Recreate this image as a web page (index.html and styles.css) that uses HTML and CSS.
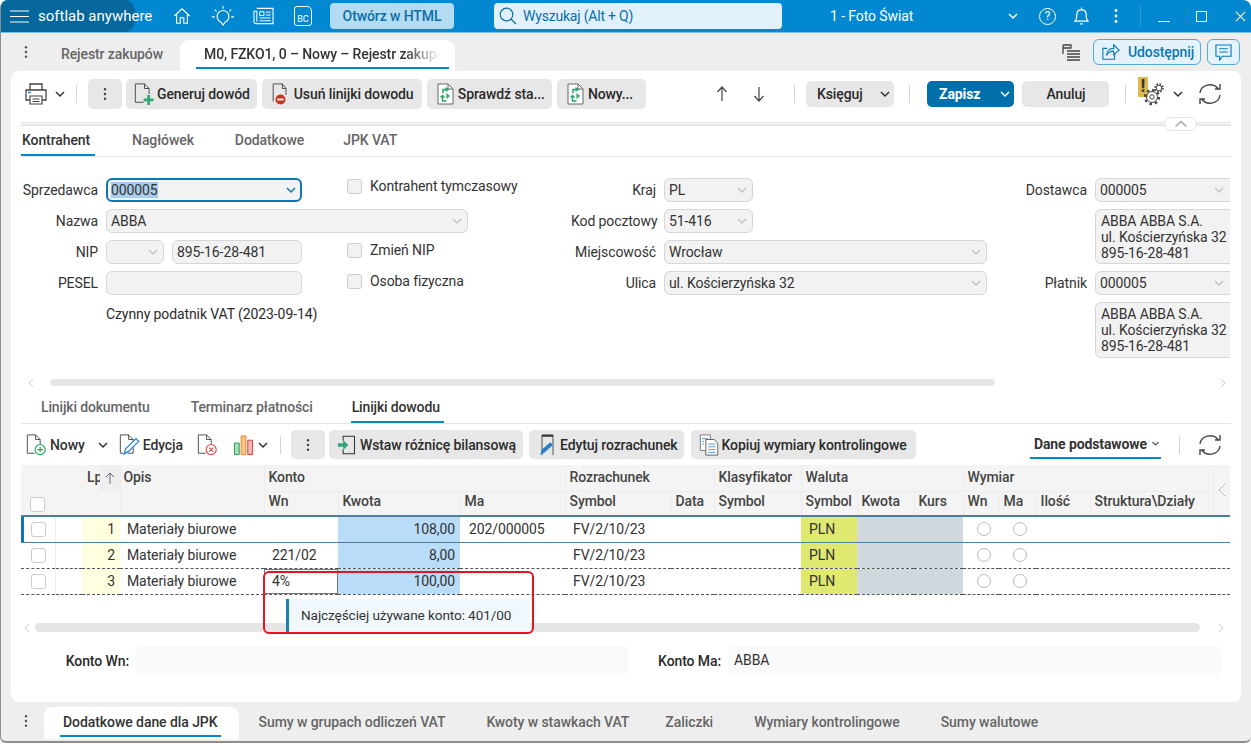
FILE: index.html
```html
<!DOCTYPE html>
<html lang="pl">
<head>
<meta charset="utf-8">
<title>softlab anywhere</title>
<link rel="stylesheet" href="styles.css">
</head>
<body>
<svg class="defs" width="0" height="0">
  <symbol id="chev" viewBox="0 0 12 12"><path d="M2 4l4 4 4-4" fill="none" stroke="currentColor" stroke-width="1.5"/></symbol>
  <symbol id="kebab" viewBox="0 0 4 16"><circle cx="2" cy="2.5" r="1.4" fill="currentColor"/><circle cx="2" cy="8" r="1.4" fill="currentColor"/><circle cx="2" cy="13.5" r="1.4" fill="currentColor"/></symbol>
  <symbol id="refresh" viewBox="0 0 24 24"><path d="M2 11a10 9 0 0 1 18-4.500M22 2v5h-5M22 13a10 9 0 0 1-18 4.500M2 22v-5h5" fill="none" stroke="#444" stroke-width="1.400"/></symbol>
  <symbol id="docarrows" viewBox="0 0 18 22"><path d="M1.500 1h10l5 5v15h-15z" fill="#fff" stroke="#666"/><path d="M11.500 1v5h5" fill="none" stroke="#666"/><path d="M9 4l4 2.500L9 9z" fill="#2ba36a"/><path d="M9.500 6.500H6.500v3.500" fill="none" stroke="#2ba36a" stroke-width="1.500"/><path d="M10 10l3.500 3L10 16z" fill="#2ba36a"/><path d="M3 14.500l3-3 3 3z" fill="#2ba36a"/><path d="M6 14v4h4" fill="none" stroke="#2ba36a" stroke-width="1.500"/></symbol>
</svg>

<div class="app">
  <header class="topbar">
    <div class="brand">
      <svg class="ham" viewBox="0 0 19 13"><path d="M0 1h19M0 6.500h19M0 12h19" stroke="#fff" stroke-width="1.200"/></svg>
      <span class="brand-name">softlab anywhere</span>
    </div>
    <svg class="tb-ic home" viewBox="0 0 20 20"><path d="M1.500 10L10 2l8.500 8M4 8.500V18h4v-6h4v6h4V8.500" fill="none" stroke="#fff" stroke-width="1.200"/></svg>
    <svg class="tb-ic bulb" viewBox="0 0 24 24"><path d="M12 22l-2.500-3.500a6.500 6.500 0 1 1 5 0z" fill="none" stroke="#fff" stroke-width="1.200"/><path d="M12 1v3M3 5l2 2M21 5l-2 2M0 13h3M21 13h3" stroke="#fff" stroke-width="1.200"/></svg>
    <svg class="tb-ic news" viewBox="0 0 22 18"><path d="M4 1h17v16H3a2 2 0 0 1-2-2V4h3v11" fill="none" stroke="#fff" stroke-width="1.100"/><path d="M7 4.500h4.500v4H7z" fill="none" stroke="#fff"/><path d="M13.500 5h5M13.500 8h5M7 11h11.500M7 14h11.500" stroke="#fff"/></svg>
    <span class="bc">BC</span>
    <button class="open-html">Otwórz w HTML</button>
    <div class="search">
      <svg class="search-ic" viewBox="0 0 18 18"><circle cx="7.500" cy="7.500" r="6.300" fill="none" stroke="#0b6ea6" stroke-width="1.200"/><path d="M12 12l5 5" stroke="#0b6ea6" stroke-width="1.200"/></svg>
      <span>Wyszukaj (Alt + Q)</span>
    </div>
    <span class="company">1 - Foto Świat</span>
    <svg class="top-chev"><use href="#chev"/></svg>
    <span class="help">?</span>
    <svg class="bell" viewBox="0 0 16 20"><path d="M1 15.500h14c-2-1.500-2-4-2-7 0-3-2-5-5-5s-5 2-5 5c0 3 0 5.500-2 7zM8 1v2.500M6.500 18.500h3" fill="none" stroke="#fff" stroke-width="1.300"/></svg>
    <svg class="top-kebab"><use href="#kebab"/></svg>
    <span class="top-sep"></span>
    <span class="win-min"></span>
    <span class="win-max"></span>
    <svg class="win-close" viewBox="0 0 12 12"><path d="M1 1l10 10M11 1L1 11" stroke="#fff" stroke-width="1.100"/></svg>
  </header>

  <nav class="doc-tabs">
    <svg class="tab-kebab"><use href="#kebab"/></svg>
    <span class="doc-tab">Rejestr zakupów</span>
    <span class="doc-tab active"><span class="fade">M0, FZKO1, 0 – Nowy – Rejestr zakupów</span></span>
    <svg class="flag-list" viewBox="0 0 18 18"><path d="M1 1v9M1 1h8v3H1M5 7h13M5 10h13M5 13h13M5 16h13" fill="none" stroke="#444" stroke-width="1.300"/></svg>
    <button class="share">
      <svg viewBox="0 0 20 20"><path d="M14 11v7H1V6h5" fill="none" stroke="#0b78b4" stroke-width="1.200"/><path d="M5 14c0-5 3-8 8-8V2l6 6-6 5V9c-4 0-6 1-8 5z" fill="none" stroke="#0b78b4" stroke-width="1.200"/></svg>
      Udostępnij
    </button>
    <button class="chat">
      <svg viewBox="0 0 18 18"><path d="M1 1h16v12H8l-3 4v-4H1zM4.500 5h9M4.500 8.500h9" fill="none" stroke="#0b78b4" stroke-width="1.200"/></svg>
    </button>
  </nav>

  <main class="card">
    <div class="toolbar">
      <svg class="printer" viewBox="0 0 22 22"><path d="M5 7V1h12v6M5 17H1V7h20v10h-4" fill="none" stroke="#444" stroke-width="1.300"/><path d="M5 13h12v8H5zM7.500 16h7M7.500 18.500h7" fill="none" stroke="#444" stroke-width="1.200"/><path d="M3 9.500h3" stroke="#1a88c9" stroke-width="1.300"/></svg>
      <svg class="chev"><use href="#chev"/></svg>
      <span class="sep"></span>
      <button class="btn kebab-btn"><svg class="kb"><use href="#kebab"/></svg></button>
      <button class="btn">
        <svg class="bi" viewBox="0 0 22 24"><path d="M1 1h10l5 5v6M10 21H1V1M11 1v5h5" fill="none" stroke="#444"/><path d="M14 13h3v4h4v3h-4v4h-3v-4h-4v-3h4z" fill="#36a67a"/></svg>
        Generuj dowód
      </button>
      <button class="btn w160">
        <svg class="bi" viewBox="0 0 22 24"><path d="M3 20V1h10l4 5v7M13 1v5h4" fill="none" stroke="#444"/><circle cx="11" cy="18" r="5.500" fill="#c8361f"/><path d="M7.500 18h7" stroke="#fff" stroke-width="2"/></svg>
        Usuń linijki dowodu
      </button>
      <button class="btn"><svg class="bi"><use href="#docarrows"/></svg>Sprawdź sta...</button>
      <button class="btn w89"><svg class="bi"><use href="#docarrows"/></svg>Nowy...</button>
      <div class="toolbar-right">
        <svg class="arrow" viewBox="0 0 12 16"><path d="M6 15V1M1.500 6L6 1l4.500 5" fill="none" stroke="#444" stroke-width="1.200"/></svg>
        <svg class="arrow second" viewBox="0 0 12 16"><path d="M6 1v14M1.500 10L6 15l4.500-5" fill="none" stroke="#444" stroke-width="1.200"/></svg>
        <span class="sep"></span>
        <button class="btn flat">Księguj<svg class="chev"><use href="#chev"/></svg></button>
        <span class="sep"></span>
        <button class="btn primary">Zapisz<svg class="chev"><use href="#chev"/></svg></button>
        <button class="btn cancel">Anuluj</button>
        <span class="sep"></span>
        <span class="gear-wrap">
          <span class="warn">!</span>
          <svg class="gear" viewBox="0 0 28 28"><circle cx="15" cy="17" r="5.500" fill="none" stroke="#444"/><circle cx="15" cy="17" r="7" fill="none" stroke="#444" stroke-width="2.400" stroke-dasharray="2.500 3"/><circle cx="15" cy="17" r="2.200" fill="none" stroke="#444"/><circle cx="22" cy="8" r="2.800" fill="none" stroke="#444"/><circle cx="22" cy="8" r="4" fill="none" stroke="#444" stroke-width="1.600" stroke-dasharray="1.600 1.540"/></svg>
        </span>
        <svg class="chev"><use href="#chev"/></svg>
        <svg class="refresh"><use href="#refresh"/></svg>
      </div>
    </div>

    <div class="collapse-bar"><span class="collapse-pill"><svg viewBox="0 0 14 8"><path d="M1.500 6.500L7 1.500l5.500 5" fill="none" stroke="#aaa" stroke-width="1.500"/></svg></span></div>

    <div class="tabs form-tabs">
      <span class="tab active">Kontrahent</span>
      <span class="tab">Nagłówek</span>
      <span class="tab">Dodatkowe</span>
      <span class="tab">JPK VAT</span>
    </div>

    <section class="form">
      <label class="lbl">Sprzedawca</label>
      <div class="field focus sprz"><span class="sel">000005</span><svg class="fchev blue"><use href="#chev"/></svg></div>
      <label class="check"><span class="cb"></span>Kontrahent tymczasowy</label>
      <label class="lbl">Kraj</label>
      <div class="field kraj">PL<svg class="fchev"><use href="#chev"/></svg></div>
      <label class="lbl">Dostawca</label>
      <div class="field clip">000005<svg class="fchev"><use href="#chev"/></svg></div>

      <label class="lbl">Nazwa</label>
      <div class="field nazwa">ABBA<svg class="fchev"><use href="#chev"/></svg></div>
      <label class="lbl">Kod pocztowy</label>
      <div class="field kraj">51-416<svg class="fchev"><use href="#chev"/></svg></div>
      <span class="empty"></span>
      <div class="field clip addr">ABBA ABBA S.A.<br>ul. Kościerzyńska 32<br>895-16-28-481</div>

      <label class="lbl">NIP</label>
      <div class="nip-pair">
        <div class="field nip-pre"><svg class="fchev"><use href="#chev"/></svg></div>
        <div class="field nip-num">895-16-28-481</div>
      </div>
      <label class="check low"><span class="cb"></span>Zmień NIP</label>
      <label class="lbl">Miejscowość</label>
      <div class="field city">Wrocław<svg class="fchev"><use href="#chev"/></svg></div>
      <span class="empty"></span>

      <label class="lbl">PESEL</label>
      <div class="field pesel"></div>
      <label class="check low"><span class="cb"></span>Osoba fizyczna</label>
      <label class="lbl">Ulica</label>
      <div class="field city">ul. Kościerzyńska 32<svg class="fchev"><use href="#chev"/></svg></div>
      <label class="lbl">Płatnik</label>
      <div class="field clip">000005<svg class="fchev"><use href="#chev"/></svg></div>

      <span class="empty"></span>
      <span class="vat">Czynny podatnik VAT (2023-09-14)</span>
      <div class="field clip addr addr2">ABBA ABBA S.A.<br>ul. Kościerzyńska 32<br>895-16-28-481</div>
    </section>

    <div class="hscroll form-scroll">
      <svg class="sarrow" viewBox="0 0 6 10"><path d="M5 1L1 5l4 4" fill="none" stroke="#ccc"/></svg>
      <span class="thumb"></span>
      <svg class="sarrow end" viewBox="0 0 6 10"><path d="M1 1l4 4-4 4" fill="none" stroke="#ccc"/></svg>
    </div>

    <div class="tabs sub-tabs">
      <span class="tab">Linijki dokumentu</span>
      <span class="tab">Terminarz płatności</span>
      <span class="tab active">Linijki dowodu</span>
    </div>

    <div class="toolbar2">
      <span class="tool t-new">
        <svg class="ti" viewBox="0 0 22 24"><path d="M9 21H1V1h9l5 5v6M10 1v5h5" fill="none" stroke="#444"/><circle cx="15" cy="17" r="5.500" fill="#fff" stroke="#1da652" stroke-width="1.200"/><path d="M15 14v6M12 17h6" stroke="#1da652" stroke-width="1.200"/></svg>
        Nowy<svg class="chev"><use href="#chev"/></svg>
      </span>
      <span class="tool t-edit">
        <svg class="ti" viewBox="0 0 22 24"><path d="M4 21H1V1h9l5 5v3M10 1v5h5M15 14v7H9" fill="none" stroke="#444"/><path d="M5 22l2-6L18 5l3 3-11 11z" fill="#fff" stroke="#2a83cc" stroke-width="1.400"/></svg>
        Edycja
      </span>
      <svg class="ti t-del" viewBox="0 0 22 24"><path d="M9 21H1V1h9l5 5v6M10 1v5h5" fill="none" stroke="#444"/><circle cx="15" cy="17" r="5.500" fill="#fff" stroke="#e04444" stroke-width="1.200"/><path d="M12.800 14.800l4.400 4.400M17.200 14.800l-4.400 4.400" stroke="#e04444" stroke-width="1.200"/></svg>
      <svg class="ti t-chart" viewBox="0 0 22 22"><path d="M1.500 9h5v12h-5z" fill="#a9dcb8" stroke="#1d9a4b"/><path d="M8.500 1.500h5V21h-5z" fill="#f8c58a" stroke="#e8832a"/><path d="M15.500 6h5v15h-5z" fill="#f4b5b5" stroke="#d93a3a"/></svg>
      <svg class="chev"><use href="#chev"/></svg>
      <span class="sep"></span>
      <button class="btn kebab-btn"><svg class="kb"><use href="#kebab"/></svg></button>
      <button class="btn b-wstaw">
        <svg class="bi" viewBox="0 0 24 24"><path d="M7 7V2h13v20H7v-5" fill="none" stroke="#333" stroke-width="1.200"/><path d="M1 10h6V6l6 6-6 6v-4H1z" fill="#36a67a"/></svg>
        Wstaw różnicę bilansową
      </button>
      <button class="btn b-edyt">
        <svg class="bi" viewBox="0 0 22 24"><path d="M5 23V1h12v22" fill="none" stroke="#444"/><path d="M5 1h12v2H5z" fill="#333"/><path d="M3 23l2-6 9-8 3 3-9 8z" fill="#2a7cc4"/></svg>
        Edytuj rozrachunek
      </button>
      <button class="btn b-kop">
        <svg class="bi" viewBox="0 0 22 24"><path d="M1 1h11v17H1z" fill="#fff" stroke="#777"/><path d="M7 6h9l4 4v13H7z" fill="#fff" stroke="#555"/><path d="M9.500 11h8M9.500 14h8M9.500 17h8M9.500 20h8M3 5h6M3 8h2M3 11h2" stroke="#4a8fc4"/></svg>
        Kopiuj wymiary kontrolingowe
      </button>
      <div class="toolbar2-right">
        <span class="view-select">Dane podstawowe<svg class="chev mini"><use href="#chev"/></svg></span>
        <span class="sep"></span>
        <svg class="refresh"><use href="#refresh"/></svg>
      </div>
    </div>

    <div class="grid-area">
      <table class="grid">
        <colgroup>
          <col class="c34"><col class="c27"><col class="c38"><col class="c144"><col class="c74"><col class="c122"><col class="c105"><col class="c106"><col class="c43"><col class="c87"><col class="c56"><col class="c57"><col class="c49"><col class="c36"><col class="c37"><col class="c54"><col class="c123"><col class="c17">
        </colgroup>
        <thead>
          <tr>
            <th rowspan="2" class="th-cb"><span class="cb"></span></th>
            <th rowspan="2"></th>
            <th rowspan="2" class="th-lp"><span class="lp-clip">Lp</span><span class="sort"><svg viewBox="0 0 10 12"><path d="M5 12V1M1 5l4-4 4 4" fill="none" stroke="#666"/></svg></span></th>
            <th rowspan="2" class="th-opis">Opis</th>
            <th colspan="3">Konto</th>
            <th colspan="2">Rozrachunek</th>
            <th>Klasyfikator</th>
            <th colspan="3">Waluta</th>
            <th colspan="4">Wymiar</th>
            <th rowspan="2" class="th-arrow"><svg viewBox="0 0 8 14"><path d="M7 1L1 7l6 6" fill="none" stroke="#bbb"/></svg></th>
          </tr>
          <tr class="h2">
            <th>Wn</th><th>Kwota</th><th>Ma</th><th>Symbol</th><th>Data</th><th>Symbol</th><th>Symbol</th><th>Kwota</th><th>Kurs</th><th>Wn</th><th>Ma</th><th>Ilość</th><th>Struktura\Działy</th>
          </tr>
        </thead>
        <tbody>
          <tr class="current">
            <td class="td-cb"><span class="cb"></span></td><td></td><td class="lp">1</td><td class="opis">Materiały biurowe</td><td></td><td class="amt">108,00</td><td class="ma">202/000005</td><td>FV/2/10/23</td><td></td><td></td><td class="pln">PLN</td><td class="grey"></td><td class="grey"></td><td class="td-r"><span class="radio"></span></td><td class="td-r"><span class="radio"></span></td><td></td><td></td><td></td>
          </tr>
          <tr>
            <td class="td-cb"><span class="cb"></span></td><td></td><td class="lp">2</td><td class="opis">Materiały biurowe</td><td>221/02</td><td class="amt">8,00</td><td class="ma"></td><td>FV/2/10/23</td><td></td><td></td><td class="pln">PLN</td><td class="grey"></td><td class="grey"></td><td class="td-r"><span class="radio"></span></td><td class="td-r"><span class="radio"></span></td><td></td><td></td><td></td>
          </tr>
          <tr class="dashed">
            <td class="td-cb"><span class="cb"></span></td><td></td><td class="lp">3</td><td class="opis">Materiały biurowe</td><td class="editing">4%</td><td class="amt">100,00</td><td class="ma"></td><td>FV/2/10/23</td><td></td><td></td><td class="pln">PLN</td><td class="grey"></td><td class="grey"></td><td class="td-r"><span class="radio"></span></td><td class="td-r"><span class="radio"></span></td><td></td><td></td><td></td>
          </tr>
        </tbody>
      </table>
      <div class="hscroll grid-scroll">
        <svg class="sarrow" viewBox="0 0 6 10"><path d="M5 1L1 5l4 4" fill="none" stroke="#ccc"/></svg>
        <span class="thumb"></span>
        <svg class="sarrow end" viewBox="0 0 6 10"><path d="M1 1l4 4-4 4" fill="none" stroke="#ccc"/></svg>
      </div>
      <div class="hint">Najczęściej używane konto: 401/00</div>
      <div class="red-mark"></div>
    </div>

    <div class="konto-row">
      <span class="k-lbl">Konto Wn:</span>
      <span class="k-val"></span>
      <span class="k-lbl k-ma">Konto Ma:</span>
      <span class="k-val">ABBA</span>
    </div>
  </main>

  <nav class="bottom-tabs">
    <svg class="tab-kebab"><use href="#kebab"/></svg>
    <span class="b-tab active"><span>Dodatkowe dane dla JPK</span></span>
    <span class="b-tab">Sumy w grupach odliczeń VAT</span>
    <span class="b-tab tight">Kwoty w stawkach VAT</span>
    <span class="b-tab">Zaliczki</span>
    <span class="b-tab">Wymiary kontrolingowe</span>
    <span class="b-tab">Sumy walutowe</span>
  </nav>
</div>
</body>
</html>
```
FILE: styles.css
```css
* { box-sizing: border-box; }
html, body { margin: 0; padding: 0; height: 744px; overflow: hidden; background: #fff; }
body { font-family: Roboto, "Liberation Sans", sans-serif; font-size: 14px; color: #2b2b2b; letter-spacing: -.1px; }
button { font: inherit; border: 0; padding: 0; letter-spacing: inherit; }
.defs { position: absolute; }
svg { display: block; flex: none; }

.app { width: 1251px; height: 743px; display: flex; flex-direction: column; background: #eee; border-radius: 8px 8px 6px 6px; overflow: hidden; border-bottom: 2px solid #8d8d8d; border-left: 1px solid #8d8d8d; }

/* top bar */
.topbar { height: 33px; flex: none; display: flex; align-items: center; background: #0288d1; color: #fff; border-bottom: 1px solid #7cc0e6; }
.topbar > * { flex: none; }
.brand { width: 135px; height: 100%; display: flex; align-items: center; gap: 9px; padding-left: 9px; background: #05679c; border-radius: 0 22px 22px 0 / 0 32px 32px 0; }
.ham { width: 19px; height: 13px; }
.brand-name { font-size: 15px; white-space: nowrap; letter-spacing: 0; }
.tb-ic { height: 20px; width: 20px; }
.home { margin-left: 37px; width: 18px; }
.bulb { margin-left: 21px; width: 22px; height: 22px; }
.news { margin-left: 19px; width: 21px; height: 18px; }
.bc { margin-left: 20px; width: 18px; height: 20px; border: 1px solid #fff; border-radius: 3px 5px 3px 3px; font-size: 9px; display: flex; align-items: flex-end; justify-content: center; padding-bottom: 1px; }
.open-html { margin-left: 18px; width: 124px; height: 26px; background: #b3dcf3; color: #0b6ea6; font-weight: 500; border-radius: 4px; font-size: 14px; letter-spacing: -.1px; white-space: nowrap; }
.search { margin-left: 40px; width: 288px; height: 26px; background: #e0f1fb; border-radius: 4px; color: #0b6ea6; display: flex; align-items: center; gap: 6px; padding-left: 5px; font-size: 14px; letter-spacing: -.2px; }
.search-ic { width: 18px; height: 18px; }
.company { margin-left: 48px; width: 175px; font-size: 14px; }
.top-chev { width: 12px; height: 12px; color: #fff; margin-left: 2px; }
.help { margin-left: 20px; width: 17px; height: 17px; border: 1px solid #fff; border-radius: 50%; font-size: 12px; display: flex; align-items: center; justify-content: center; }
.bell { margin-left: 18px; width: 15px; height: 20px; }
.top-kebab { margin-left: 25px; width: 4px; height: 16px; color: #fff; }
.top-sep { margin-left: 22px; width: 1px; height: 22px; background: #2a9bd8; }
.win-min { margin-left: 17px; width: 12px; height: 1px; background: #fff; margin-top: 10px; }
.win-max { margin-left: 26px; width: 11px; height: 11px; border: 1px solid #fff; }
.win-close { margin-left: 28px; width: 11px; height: 11px; }

/* document tabs */
.doc-tabs { height: 38px; flex: none; display: flex; align-items: flex-end; position: relative; }
.tab-kebab { width: 4px; height: 14px; color: #555; margin-left: 23px; align-self: center; }
.doc-tab { font-weight: 500; color: #666; white-space: nowrap; height: 31px; line-height: 29px; margin-left: 33px; }
.doc-tab.active { margin-left: 17px; width: 275px; background: #fff; border-radius: 9px 9px 0 0; padding: 0 15px 0 24px; color: #333; position: relative; }
.doc-tab.active::after { content: ""; position: absolute; left: 16px; right: 6px; bottom: 2px; height: 2px; background: #0288d1; }
.fade { display: block; overflow: hidden; -webkit-mask-image: linear-gradient(to right, #000 85%, transparent); mask-image: linear-gradient(to right, #000 85%, transparent); }
.flag-list { width: 18px; height: 18px; margin: 0 13px 9px auto; }
.share { width: 108px; height: 26px; margin-bottom: 6px; display: flex; align-items: center; gap: 8px; padding-left: 8px; background: #e3f2fb; border: 1px solid #55a9d8; border-radius: 6px; color: #0b78b4; font-weight: 500; letter-spacing: -.1px; }
.share svg { width: 18px; height: 18px; }
.chat { width: 33px; height: 26px; margin: 0 11px 6px 6px; display: flex; align-items: center; justify-content: center; background: #e3f2fb; border: 1px solid #55a9d8; border-radius: 6px; }
.chat svg { width: 17px; height: 17px; }

/* card */
.card { flex: 1; margin: 0 10px 0 10px; background: #fff; border-radius: 8px; padding: 8px 10px 0 10px; min-height: 0; position: relative; }

.toolbar { height: 30px; display: flex; align-items: center; }
.printer { width: 22px; height: 22px; margin-left: 4px; }
.chev { width: 12px; height: 12px; color: #333; }
.toolbar > .chev { margin-left: 7px; }
.sep { width: 1px; height: 18px; background: #d5d5d5; flex: none; }
.toolbar > .sep { margin: 0 11px 0 10px; }
.btn { height: 30px; background: #e7e7e7; border-radius: 5px; color: #2b2b2b; font-weight: 500; display: flex; align-items: center; gap: 2px; padding: 0 7px 0 8px; margin-right: 5px; white-space: nowrap; }
.w89 { width: 89px; }
.w160 { width: 160px; gap: 3px; }
.kebab-btn { width: 34px; justify-content: center; padding: 0; margin-right: 4px; }
.kb { width: 4px; height: 14px; color: #444; }
.bi { width: 21px; height: 22px; }
.toolbar-right { margin-left: auto; display: flex; align-items: center; }
.arrow { width: 12px; height: 16px; }
.arrow.second { margin-left: 25px; }
.toolbar-right .sep { margin: 0 11px; }
.arrow.second + .sep { margin-left: 29px; }
.toolbar-right .btn { height: 26px; justify-content: center; margin-right: 0; }
.toolbar-right .flat { width: 88px; justify-content: space-between; padding: 0 3px 0 11px; }
.toolbar-right .btn + .sep { margin: 0 17px 0 15px; }
.toolbar-right .primary { width: 87px; background: #0070aa; color: #fff; font-weight: 700; justify-content: space-between; padding: 0 3px 0 12px; margin-right: 8px; }
.primary .chev { color: #fff; }
.cancel { width: 87px; }
.toolbar-right .cancel + .sep { margin: 0 11px 0 16px; }
.gear-wrap { width: 28px; height: 28px; position: relative; }
.warn { position: absolute; left: 1px; top: -3px; width: 10px; height: 20px; background: #dfb94f; color: #333; font-weight: 700; font-size: 18px; line-height: 18px; text-align: center; }
.gear { position: absolute; left: 0; top: 0; width: 28px; height: 28px; }
.gear-wrap + .chev { margin-left: 7px; }
.refresh { width: 24px; height: 24px; }
.toolbar-right .refresh { margin: 0 9px 0 14px; }

.collapse-bar { height: 4px; margin-top: 13px; border-top: 1px solid #e5e5e5; border-bottom: 2px solid #e5e5e5; position: relative; }
.collapse-pill { position: absolute; left: 1143px; top: -6px; width: 33px; height: 14px; background: #fff; border: 1px solid #e3e3e3; border-radius: 8px; display: flex; align-items: center; justify-content: center; }
.collapse-pill svg { width: 14px; height: 8px; }

.tabs { display: flex; border-bottom: 1px solid #e5e5e5; font-weight: 500; color: #666; white-space: nowrap; }
.tab { display: block; height: 100%; border-bottom: 2px solid transparent; }
.tab.active { color: #333; border-bottom-color: #0288d1; }
.form-tabs { height: 31px; line-height: 28px; }
.form-tabs .tab { padding: 0 1px; margin-right: 37px; }
.form-tabs .tab + .tab { margin-right: 39px; }
.form-tabs .tab + .tab + .tab { margin-right: 37px; }
.form-tabs .tab.active { padding-right: 5px; margin-right: 36px; }

/* form */
.form { display: grid; grid-template-columns: 84px 241px 224px 93px 356px 75px 135px; grid-auto-rows: 31px; margin-top: 21px; height: 186px; width: 1208px; margin-left: 1px; overflow: hidden; }
.lbl { height: 24px; line-height: 24px; text-align: right; padding-right: 8px; white-space: nowrap; color: #333; }
.field { height: 24px; line-height: 22px; background: #f2f2f2; border: 1px solid #d6d6d6; border-radius: 6px; padding-left: 4px; position: relative; white-space: nowrap; color: #333; }
.fchev { position: absolute; right: 4px; top: 5px; width: 12px; height: 12px; color: #c4c4c4; }
.fchev.blue { color: #0b78b4; }
.sprz { width: 196px; }
.focus { border: 2px solid #0b78b4; line-height: 20px; padding-left: 3px; }
.focus .fchev { right: 3px; top: 4px; }
.sel { background: #a8cdec; }
.nazwa { width: 362px; grid-column: 2 / 4; }
.kraj { width: 89px; grid-column: 5; }
.city { width: 323px; }
.clip { width: 148px; }
.clip .fchev { right: 17px; }
.addr { grid-column: 7; height: 55px; line-height: 16px; padding: 3px 0 0 5px; grid-row: span 2; }
.addr2 { height: 56px; }
.nip-pair { display: flex; gap: 8px; }
.nip-pre { width: 58px; }
.nip-num { width: 130px; }
.pesel { width: 196px; }
.check { display: flex; align-items: center; gap: 8px; height: 16px; color: #333; white-space: nowrap; }
.check.low { margin-top: 2px; }
.cb { display: block; width: 15px; height: 15px; background: #fff; border: 1px solid #ccc; border-radius: 3px; flex: none; }
.form .cb { background: #f2f2f2; }
.empty { display: block; }
.vat { grid-column: 2 / 7; line-height: 24px; }

.hscroll { display: flex; align-items: center; position: relative; }
.sarrow { width: 6px; height: 10px; }
.thumb { display: block; background: #e6e6e6; border-radius: 5px; }
.form-scroll { margin-top: 15px; height: 7px; padding-left: 7px; }
.form-scroll .thumb { width: 945px; height: 7px; margin-left: 16px; }
.form-scroll .end { margin-left: 225px; }

.sub-tabs { height: 31px; margin-top: 7px; line-height: 28px; padding-left: 19px; letter-spacing: -.15px; }
.sub-tabs .tab { padding: 0 1px; margin-right: 37px; }
.sub-tabs .tab:first-child { margin-right: 39px; }
.sub-tabs .tab.active { margin-right: 0; padding-right: 4px; }

.toolbar2 { height: 29px; margin-top: 6px; display: flex; align-items: center; }
.toolbar2 .btn { height: 29px; padding-right: 6px; margin-right: 6px; }
.toolbar2 .b-wstaw { padding-right: 7px; }
.toolbar2 .b-edyt { margin-right: 7px; }
.toolbar2 .b-kop { padding-right: 9px; }
.toolbar2 .kebab-btn { width: 34px; margin-right: 4px; padding: 0; }
.tool { display: flex; align-items: center; gap: 3px; font-weight: 500; color: #333; }
.ti { width: 21px; height: 22px; }
.t-new { margin-left: 5px; }
.t-new .chev { margin-left: 9px; }
.t-edit { margin-left: 10px; gap: 3px; }
.t-del { margin-left: 14px; }
.t-chart { margin-left: 15px; }
.t-chart + .chev { margin-left: 3px; }
.toolbar2 > .sep { margin: 0 10px 0 11px; }
.toolbar2-right { margin-left: auto; display: flex; align-items: center; }
.view-select { display: flex; align-items: center; gap: 4px; height: 29px; line-height: 30px; font-weight: 700; color: #333; border-bottom: 2px solid #0288d1; padding: 0 1px 0 4px; }
.chev.mini { width: 9px; height: 9px; color: #555; }
.toolbar2-right .sep { margin: 0 18px 0 18px; }
.toolbar2-right .refresh { margin-right: 9px; }

/* grid */
.grid-area { position: relative; margin-top: 6px; height: 167px; }
.grid { table-layout: fixed; width: 1209px; border-collapse: collapse; color: #333; }
.c34 { width: 34px; } .c27 { width: 27px; } .c38 { width: 38px; } .c144 { width: 144px; } .c74 { width: 74px; } .c122 { width: 122px; } .c105 { width: 105px; } .c106 { width: 106px; } .c43 { width: 43px; } .c87 { width: 87px; } .c56 { width: 56px; } .c57 { width: 57px; } .c49 { width: 49px; } .c36 { width: 36px; } .c37 { width: 37px; } .c54 { width: 54px; } .c123 { width: 123px; } .c17 { width: 17px; }
.grid th { background: #f4f4f4; font-weight: 500; color: #444; text-align: left; vertical-align: top; padding: 0 4px; height: 26px; line-height: 25px; border-left: 1px solid #ececec; border-bottom: 1px solid #ececec; white-space: nowrap; overflow: hidden; }
.grid thead tr:first-child th:first-child, .grid thead tr:first-child th:nth-child(2), .grid thead tr:first-child th:nth-child(3) { border-left: 0; }
.grid .h2 th { height: 25px; line-height: 19px; }
.grid .th-cb { vertical-align: bottom; padding: 0 0 3px 9px; }
.grid .th-opis { padding-left: 3px; }
.th-lp { position: relative; }
.lp-clip { display: block; width: 14px; overflow: hidden; padding-left: 1px; }
.sort { position: absolute; right: 0; top: 0; width: 20px; height: 26px; background: #efefef; display: flex; align-items: center; justify-content: center; }
.sort svg { width: 10px; height: 12px; }
.th-arrow svg { width: 8px; height: 14px; margin-top: 18px; }
.grid td { height: 26px; padding: 0 0 0 8px; white-space: nowrap; overflow: hidden; background: #fff; }
.grid td.opis { padding-left: 7px; }
.td-cb { padding-left: 10px !important; border-right: 1px solid #eee; }
.lp { background: #ffffe0 !important; text-align: right; padding-right: 5px !important; }
.amt { background: #b9dcf8 !important; text-align: right; padding-right: 5px !important; }
.ma { padding-left: 9px !important; }
.pln { background: #dfe86f !important; }
.grey { background: #cfd8dc !important; }
.td-r { padding-left: 14px !important; }
.radio { display: block; width: 14px; height: 14px; border: 1px solid #bbb; border-radius: 50%; background: #fff; }
.current td { border-top: 2px solid #4d7f9c; border-bottom: 1px solid #4d7f9c; }
.current .td-cb { box-shadow: inset 3px 0 0 #0b78b4; }
.dashed td { border-top: 1px dashed #555; border-bottom: 1px dashed #555; }
.grid td.editing { box-shadow: inset 0 0 0 1px #777; background: #fff; }
.grid-scroll { position: absolute; left: 0; top: 158px; width: 100%; height: 9px; padding-left: 3px; }
.grid-scroll .thumb { width: 1165px; height: 9px; margin-left: 5px; }
.grid-scroll .end { margin-left: 18px; }
.hint { position: absolute; left: 265px; top: 134px; width: 244px; height: 33px; line-height: 32px; background: #f0f8fe; border-left: 3px solid #1a7fb5; padding-left: 12px; white-space: nowrap; color: #333; font-size: 13.600px; }
.red-mark { position: absolute; left: 242px; top: 106px; width: 271px; height: 63px; border: 2px solid #e8131f; border-radius: 6px; }

.konto-row { display: flex; align-items: center; height: 29px; margin-top: 14px; }
.k-lbl { width: 114px; text-align: right; padding-right: 6px; font-weight: 500; white-space: nowrap; }
.k-ma { width: 100px; padding-right: 7px; }
.k-val { width: 493px; height: 29px; line-height: 29px; background: #fafafa; border-radius: 5px; padding-left: 6px; color: #333; }

/* bottom */
.bottom-tabs { height: 39px; flex: none; display: flex; align-items: flex-end; font-weight: 500; color: #666; white-space: nowrap; padding-bottom: 2px; letter-spacing: -.07px; }
.b-tab { height: 32px; line-height: 30px; margin-right: 41px; }
.b-tab.tight { margin-right: 36px; }
.b-tab.active { margin-left: 16px; margin-right: 20px; padding: 0 21px 0 19px; background: #fff; border-radius: 8px 8px 0 0; color: #333; }
.b-tab.active span { display: block; height: 30px; margin: 0 -3px; padding: 0 3px; border-bottom: 2px solid #0288d1; }
```
